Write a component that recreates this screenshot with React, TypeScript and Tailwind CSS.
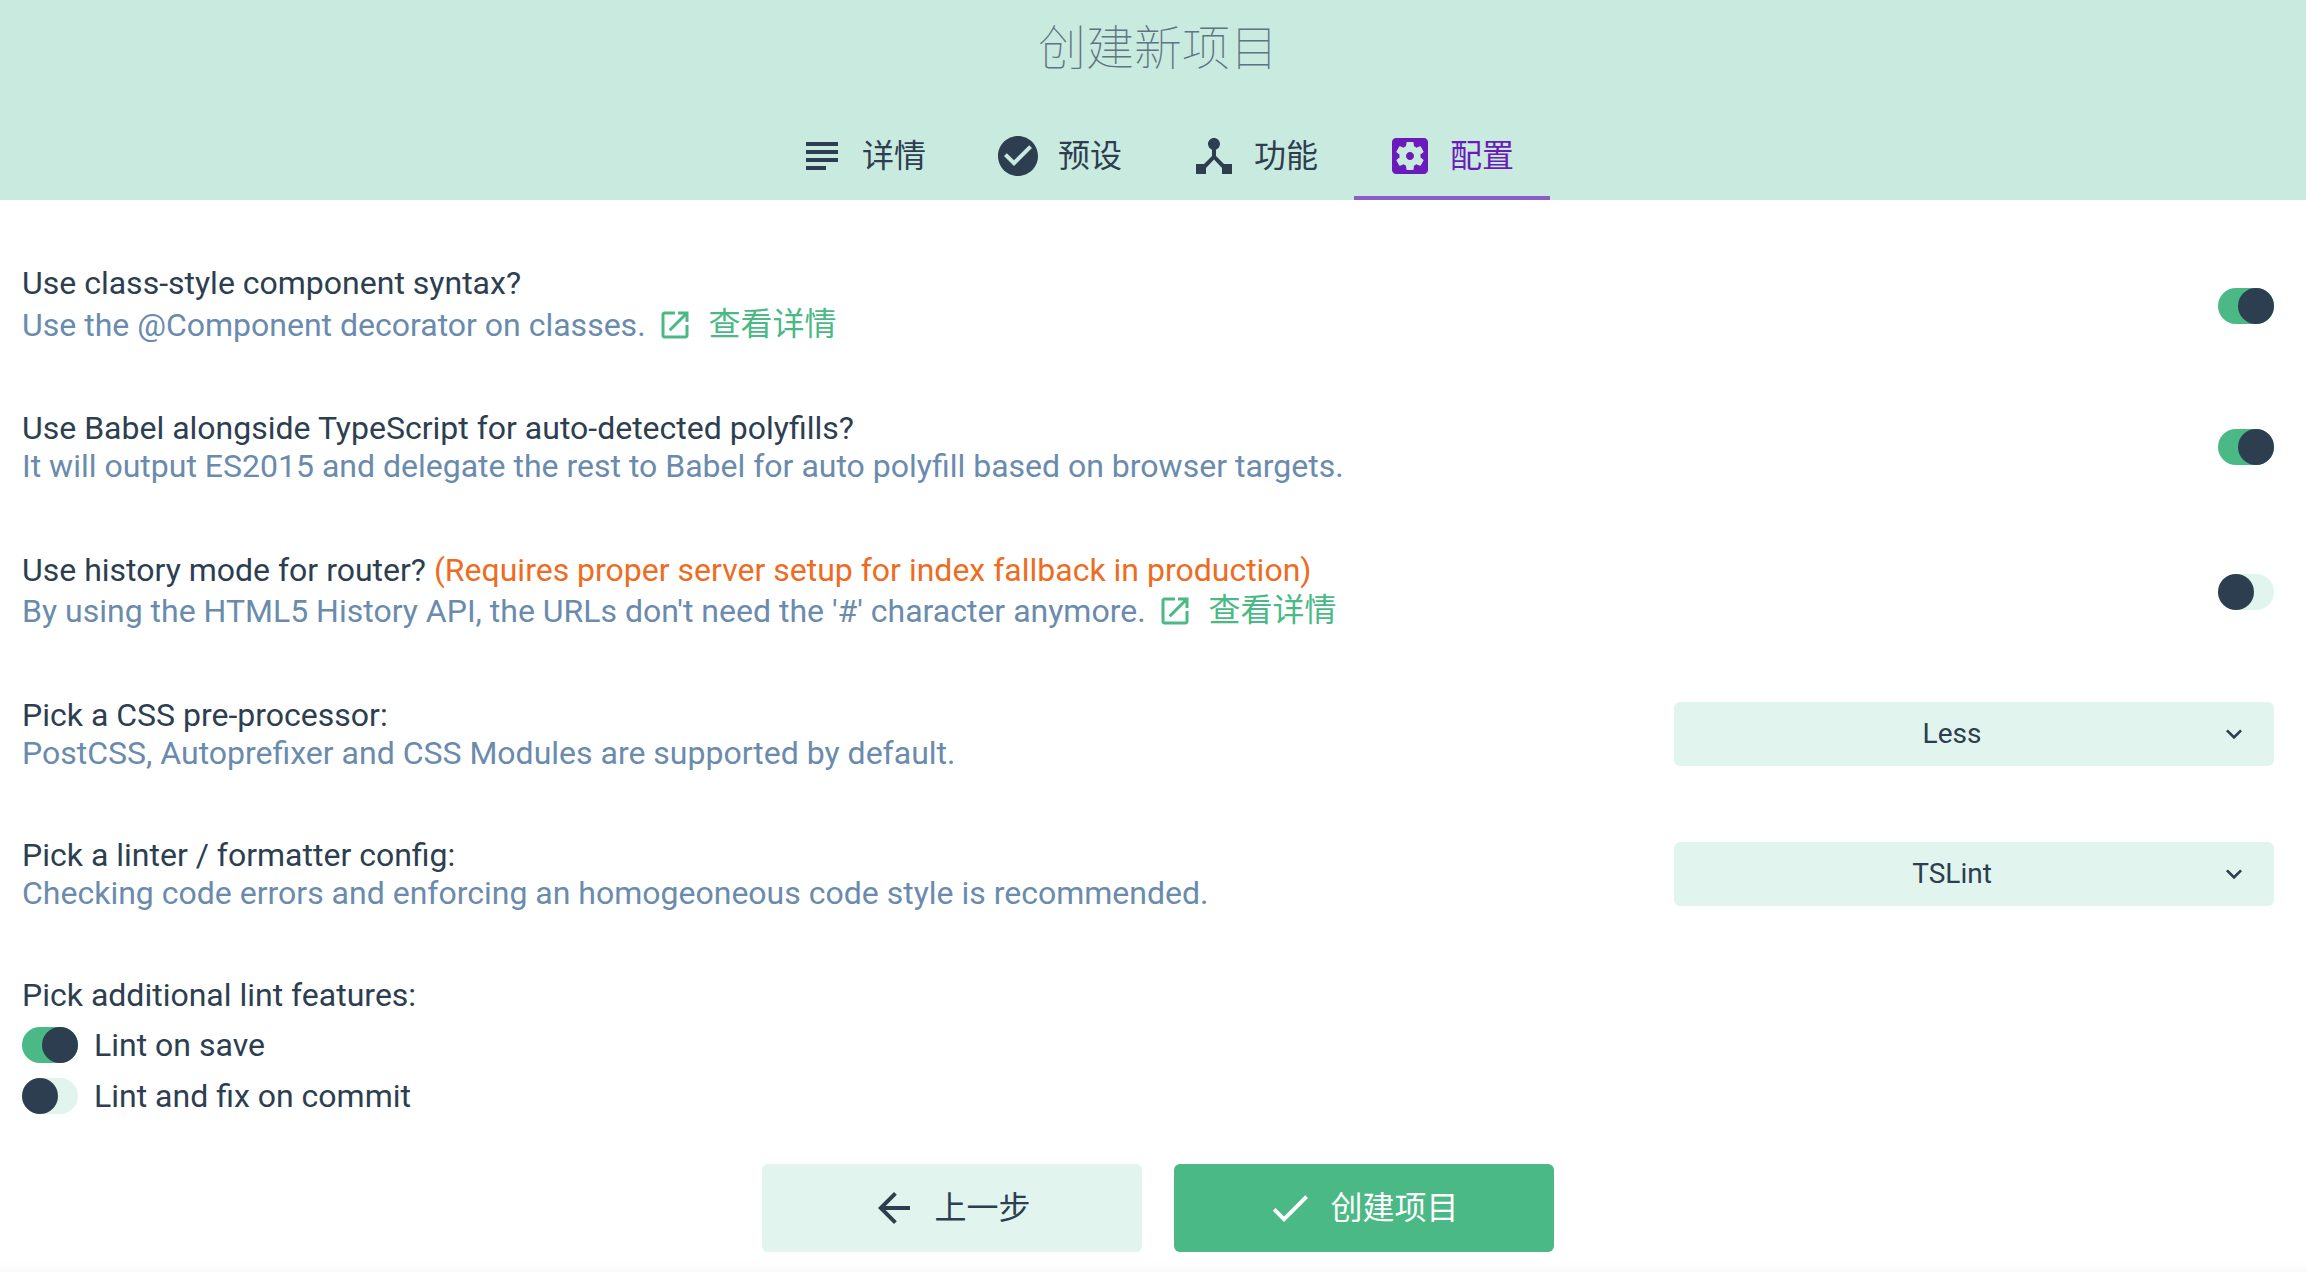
const P = {
  subject: "M14 17H4v2h10v-2zm6-8H4v2h16V9zM4 15h16v-2H4v2zM4 5v2h16V5H4z",
  check: "M12 2C6.48 2 2 6.48 2 12s4.48 10 10 10 10-4.48 10-10S17.52 2 12 2zm-2 15l-5-5 1.41-1.41L10 14.17l7.59-7.59L19 8l-9 9z",
  hub: "M17 16l-4-4V8.82C14.16 8.4 15 7.3 15 6c0-1.66-1.34-3-3-3S9 4.34 9 6c0 1.3.84 2.4 2 2.82V12l-4 4H3v5h5v-3.05l4-4.2 4 4.2V21h5v-5h-4z",
  settings: "M12 10c-1.1 0-2 .9-2 2s.9 2 2 2 2-.9 2-2-.9-2-2-2zm7-7H5c-1.11 0-2 .9-2 2v14c0 1.1.89 2 2 2h14c1.11 0 2-.9 2-2V5c0-1.1-.89-2-2-2zm-1.75 9c0 .23-.02.46-.05.68l1.48 1.16c.13.11.17.3.08.45l-1.4 2.42c-.09.15-.27.21-.43.15l-1.74-.7c-.36.28-.76.51-1.18.69l-.26 1.85c-.03.17-.18.3-.35.3h-2.8c-.17 0-.32-.13-.35-.29l-.26-1.85c-.43-.18-.82-.41-1.18-.69l-1.74.7c-.16.06-.34 0-.43-.15l-1.4-2.42c-.09-.15-.05-.34.08-.45l1.48-1.16c-.03-.23-.05-.46-.05-.69 0-.23.02-.46.05-.68l-1.48-1.16c-.13-.11-.17-.3-.08-.45l1.4-2.42c.09-.15.27-.21.43-.15l1.74.7c.36-.28.76-.51 1.18-.69l.26-1.85c.03-.17.18-.3.35-.3h2.8c.17 0 .32.13.35.29l.26 1.85c.43.18.82.41 1.18.69l1.74-.7c.16-.06.34 0 .43.15l1.4 2.42c.09.15.05.34-.08.45l-1.48 1.16c.03.23.05.46.05.69z",
  open: "M19 19H5V5h7V3H5c-1.11 0-2 .9-2 2v14c0 1.1.89 2 2 2h14c1.1 0 2-.9 2-2v-7h-2v7zM14 3v2h3.59l-9.83 9.83 1.41 1.41L19 6.41V10h2V3h-7z",
  back: "M20 11H7.83l5.59-5.59L12 4l-8 8 8 8 1.41-1.41L7.83 13H20v-2z",
  done: "M9 16.2L4.8 12l-1.4 1.4L9 19 21 7l-1.4-1.4L9 16.2z",
  down: "M7.41 8.59L12 13.17l4.59-4.58L18 10l-6 6-6-6 1.41-1.41z",
};

function Icon({ d, className }: { d: string; className: string }) {
  return (
    <svg viewBox="0 0 24 24" fill="currentColor" className={className}>
      <path d={d} />
    </svg>
  );
}

function Toggle({ on, className }: { on?: boolean; className?: string }) {
  return (
    <div className={`flex h-9 w-14 shrink-0 rounded-full ${on ? "justify-end bg-[#4ab985]" : "justify-start bg-[#e2f4ee]"} ${className ?? ""}`}>
      <div className="h-9 w-9 rounded-full bg-[#2c3e50]" />
    </div>
  );
}

function Tab({ d, label, active }: { d: string; label: string; active?: boolean }) {
  return (
    <div className={`flex h-[82px] w-[196px] items-center gap-4 border-b-4 pb-[3px] pl-8 ${active ? "border-[#8a5cc6] text-[#6a1bb9]" : "border-transparent text-[#2c3e50]"}`}>
      <Icon d={d} className="h-12 w-12 shrink-0" />
      <span className="text-[32px] leading-[38px]">{label}</span>
    </div>
  );
}

function Link() {
  return (
    <span className="ml-[11px] inline-flex items-center gap-4 text-[#4ab985]">
      <Icon d={P.open} className="h-9 w-9" />
      <span className="text-[32px] leading-[43px]">查看详情</span>
    </span>
  );
}

function Row({ title, desc, right, className }: { title: React.ReactNode; desc: React.ReactNode; right: React.ReactNode; className?: string }) {
  return (
    <div className={`flex items-center justify-between pl-[22px] pr-8 pt-8 ${className ?? "pb-8"}`}>
      <div>
        <div className="h-[38px] leading-[38px]">{title}</div>
        <div className="leading-[38px] text-[#6a8bad]">{desc}</div>
      </div>
      {right}
    </div>
  );
}

function Select({ value }: { value: string }) {
  return (
    <div className="flex h-16 w-[600px] items-center rounded-md bg-[#e2f4ee] pl-3 pr-6">
      <span className="flex-1 text-center text-[28px]">{value}</span>
      <Icon d={P.down} className="h-8 w-8" />
    </div>
  );
}

export default function App() {
  return (
    <div
      className="flex h-[1272px] w-[2306px] flex-col overflow-hidden bg-white text-[32px] text-[#2c3e50]"
      style={{ fontFamily: 'Roboto, "Noto Sans CJK SC", sans-serif' }}
    >
      <header className="h-[200px] bg-[#c9eade]">
        <h1 className="pl-[10px] pt-[21px] text-center text-[48px] font-thin leading-[56px] text-[#5e7480]">创建新项目</h1>
        <div className="mt-[41px] flex justify-center pl-[10px]">
          <Tab d={P.subject} label="详情" />
          <Tab d={P.check} label="预设" />
          <Tab d={P.hub} label="功能" />
          <Tab d={P.settings} label="配置" active />
        </div>
      </header>

      <main className="pt-[32px]">
        <Row
          title="Use class-style component syntax?"
          desc={<span className="flex h-[43px] items-center pt-[2px]">Use the @Component decorator on classes.<Link /></span>}
          right={<Toggle on className="mt-[3px]" />}
        />
        <Row
          className="pb-[34px]"
          title="Use Babel alongside TypeScript for auto-detected polyfills?"
          desc="It will output ES2015 and delegate the rest to Babel for auto polyfill based on browser targets."
          right={<Toggle on />}
        />
        <Row
          title={<>Use history mode for router? <span className="text-[#ee6c1f]">(Requires proper server setup for index fallback in production)</span></>}
          desc={<span className="flex h-[43px] items-center">By using the HTML5 History API, the URLs don't need the '#' character anymore.<Link /></span>}
          right={<Toggle />}
        />
        <Row
          title="Pick a CSS pre-processor:"
          desc="PostCSS, Autoprefixer and CSS Modules are supported by default."
          right={<Select value="Less" />}
        />
        <Row
          title="Pick a linter / formatter config:"
          desc="Checking code errors and enforcing an homogeoneous code style is recommended."
          right={<Select value="TSLint" />}
        />
        <div className="pl-[22px] pt-[32px]">
          <div className="leading-[38px]">Pick additional lint features:</div>
          <div className="mt-[13px] flex items-center gap-4 leading-9"><Toggle on /><span>Lint on save</span></div>
          <div className="mt-[15px] flex items-center gap-4 leading-9"><Toggle /><span>Lint and fix on commit</span></div>
        </div>
      </main>

      <footer className="mt-[50px] flex justify-center gap-8 pl-[10px]">
        <button className="flex h-[88px] w-[380px] items-center justify-center gap-4 rounded-md bg-[#e2f4ee] pr-[3px] text-[32px] text-[#2c3e50]">
          <Icon d={P.back} className="h-12 w-12" />
          <span>上一步</span>
        </button>
        <button className="flex h-[88px] w-[380px] items-center justify-center gap-4 rounded-md bg-[#4ab985] pr-[3px] text-[32px] text-white">
          <Icon d={P.done} className="h-12 w-12" />
          <span>创建项目</span>
        </button>
      </footer>
      <div className="mt-auto h-[10px] bg-linear-to-b from-white to-[#f9f9f9]" />
    </div>
  );
}
